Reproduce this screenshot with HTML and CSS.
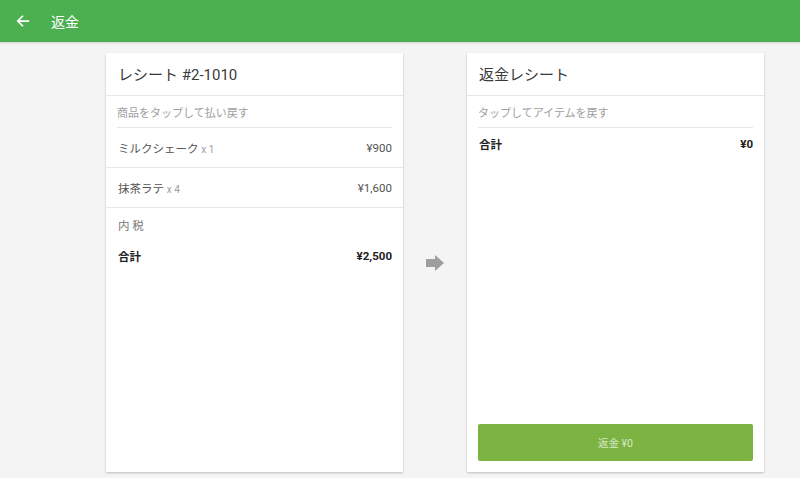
FILE: index.html
```html
<!DOCTYPE html>
<html lang="ja">
<head>
    <meta charset="UTF-8">
    <meta name="viewport" content="width=device-width, initial-scale=1.0">
    <title>返金</title>
    <link rel="stylesheet" href="styles.css">
</head>
<body>
    <header class="appbar">
        <svg class="back" width="14" height="14" viewBox="0 0 16 16">
            <path d="M15 8H2.5M8 2L2 8l6 6" fill="none" stroke="#fff" stroke-width="2"/>
        </svg>
        <span class="appbar-title">返金</span>
    </header>

    <main class="page">
        <section class="card">
            <div class="card-title">レシート #2-1010</div>
            <div class="hint">商品をタップして払い戻す</div>
            <div class="row item">
                <span>ミルクシェーク <small>x 1</small></span>
                <span>¥900</span>
            </div>
            <div class="row item">
                <span>抹茶ラテ <small>x 4</small></span>
                <span>¥1,600</span>
            </div>
            <div class="row tax">内 税</div>
            <div class="row total">
                <span>合計</span>
                <span>¥2,500</span>
            </div>
        </section>

        <div class="arrow">
            <svg width="18" height="16" viewBox="0 0 18 16">
                <path d="M0 4h9V0l9 8-9 8v-4H0z" fill="#9e9e9e"/>
            </svg>
        </div>

        <section class="card">
            <div class="card-title">返金レシート</div>
            <div class="hint">タップしてアイテムを戻す</div>
            <div class="row total small-total">
                <span>合計</span>
                <span>¥0</span>
            </div>
            <button class="refund">返金 ¥0</button>
        </section>
    </main>
</body>
</html>
```

FILE: styles.css
```css
html, body {
    margin: 0;
    height: 100%;
}
body {
    font-family: Roboto, "Noto Sans CJK JP", sans-serif;
    background: #f4f4f4;
    color: #212121;
    overflow: hidden;
}
.appbar {
    height: 42px;
    background: #4caf50;
    display: flex;
    align-items: center;
    padding-left: 16px;
    box-shadow: 0 1px 2px rgba(0,0,0,0.15);
}
.back {
    margin-right: 21px;
}
.appbar-title {
    color: #fff;
    font-size: 14px;
}
.page {
    display: flex;
    align-items: stretch;
    padding: 11px 36px 6px 106px;
    height: 419px;
}
.card {
    width: 297px;
    background: #fff;
    box-shadow: 0 1px 2px rgba(0,0,0,0.22);
    display: flex;
    flex-direction: column;
}
.card-title {
    height: 42px;
    line-height: 44px;
    padding: 0 12px;
    font-size: 15px;
    color: #3a3a3a;
    border-bottom: 1px solid #e6e6e6;
}
.hint {
    margin: 0 11px;
    height: 31px;
    line-height: 35px;
    font-size: 11px;
    color: #9e9e9e;
    border-bottom: 1px solid #e6e6e6;
}
.row {
    display: flex;
    justify-content: space-between;
    align-items: center;
    padding: 0 11px 0 12px;
    font-size: 11.5px;
}
.item {
    height: 39px;
    color: #555;
    border-bottom: 1px solid #e6e6e6;
}
.item small {
    font-size: 10px;
    color: #9e9e9e;
}
.tax {
    height: 34px;
    color: #777;
}
.total {
    height: 27px;
    font-weight: bold;
    color: #212121;
}
.small-total {
    height: 32px;
}
.arrow {
    width: 64px;
    display: flex;
    align-items: center;
    justify-content: center;
}
.refund {
    margin: auto 11px 11px;
    height: 37px;
    border: none;
    border-radius: 2px;
    background: #7cb342;
    color: #d7e8c4;
    font-family: inherit;
    font-size: 10.5px;
}
```
